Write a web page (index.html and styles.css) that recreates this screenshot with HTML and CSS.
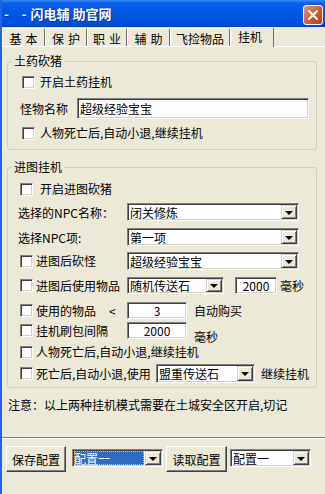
FILE: index.html
```html
<!DOCTYPE html>
<html lang="zh-CN">
<head>
    <meta charset="UTF-8">
    <title>闪电辅助</title>
    <link rel="stylesheet" href="styles.css">
</head>
<body>
    <div class="window">
        <div class="titlebar">
            <span class="title"><span class="dashes">- -</span>闪电辅 助官网</span>
            <span class="close">
                <svg width="20" height="20" viewBox="0 0 20 20">
                    <path d="M6 6 L14 14 M14 6 L6 14" stroke="#fff" stroke-width="2" stroke-linecap="round"/>
                </svg>
            </span>
        </div>

        <div class="tabs">
            <div class="tab">基本</div>
            <div class="tab">保护</div>
            <div class="tab">职业</div>
            <div class="tab">辅助</div>
            <div class="tab">飞捡物品</div>
            <div class="tab active">挂机</div>
        </div>

        <div class="panel">
            <fieldset class="group g1">
                <legend>土药砍猪</legend>
                <div class="row r-check g1-r1">
                    <span class="cb"></span><span class="cb-text">开启土药挂机</span>
                </div>
                <div class="row g1-r2">
                    <span class="lbl-name">怪物名称</span>
                    <span class="edit edit-name">超级经验宝宝</span>
                </div>
                <div class="row r-check g1-r3">
                    <span class="cb"></span><span class="cb-text">人物死亡后,自动小退,继续挂机</span>
                </div>
            </fieldset>

            <fieldset class="group g2">
                <legend>进图挂机</legend>
                <div class="row r-check g2-a">
                    <span class="cb"></span><span class="cb-text wide-gap">开启进图砍猪</span>
                </div>
                <div class="row g2-b">
                    <span class="lead lead-lbl">选择的NPC名称：</span>
                    <div class="combo combo-long"><span class="val">闭关修炼</span><span class="drop"></span></div>
                </div>
                <div class="row g2-c">
                    <span class="lead lead-lbl">选择NPC项:</span>
                    <div class="combo combo-long"><span class="val">第一项</span><span class="drop"></span></div>
                </div>
                <div class="row g2-d">
                    <span class="lead"><span class="cb"></span><span class="cb-text">进图后砍怪</span></span>
                    <div class="combo combo-long"><span class="val">超级经验宝宝</span><span class="drop"></span></div>
                </div>
                <div class="row g2-e">
                    <span class="lead"><span class="cb"></span><span class="cb-text">进图后使用物品</span></span>
                    <div class="combo combo-item"><span class="val">随机传送石</span><span class="drop"></span></div>
                    <span class="edit edit-ms">2000</span>
                    <span class="unit">毫秒</span>
                </div>
                <div class="row g2-f">
                    <span class="lead"><span class="cb"></span><span class="cb-text">使用的物品</span><span class="lt">&lt;</span></span>
                    <span class="edit edit-num">3</span>
                    <span class="after">自动购买</span>
                </div>
                <div class="row g2-g">
                    <span class="lead"><span class="cb"></span><span class="cb-text">挂机刷包间隔</span></span>
                    <span class="edit edit-num">2000</span>
                    <span class="after low">毫秒</span>
                </div>
                <div class="row r-check g2-h">
                    <span class="cb"></span><span class="cb-text">人物死亡后,自动小退,继续挂机</span>
                </div>
                <div class="row g2-i">
                    <span class="lead lead-wide"><span class="cb"></span><span class="cb-text">死亡后,自动小退,使用</span></span>
                    <div class="combo combo-death"><span class="val">盟重传送石</span><span class="drop"></span></div>
                    <span class="after-i">继续挂机</span>
                </div>
            </fieldset>

            <p class="note">注意：以上两种挂机模式需要在土城安全区开启,切记</p>
        </div>

        <div class="footer">
            <button class="btn btn-save">保存配置</button>
            <div class="combo combo-cfg"><span class="val selected">配置一</span><span class="drop"></span></div>
            <button class="btn btn-load">读取配置</button>
            <div class="combo combo-cfg2"><span class="val">配置一</span><span class="drop"></span></div>
        </div>
    </div>
</body>
</html>
```

FILE: styles.css
```css
* {
    box-sizing: border-box;
}

body {
    margin: 0;
    font-family: "Noto Sans CJK SC", "DejaVu Sans", sans-serif;
    font-size: 12px;
    color: #000;
    background: #ECE9D8;
    overflow: hidden;
}

.window {
    width: 325px;
    height: 494px;
    background: #ECE9D8;
    border-left: 2px solid #2761DB;
    overflow: hidden;
}

/* title bar */
.titlebar {
    height: 27px;
    margin-left: -2px;
    padding: 0 2px 0 4px;
    display: flex;
    justify-content: space-between;
    background: linear-gradient(to bottom, #3C8CFA 0, #0A60EB 3px, #0057E6 50%, #0052DE 85%, #0044C8 100%);
}

.title {
    color: #fff;
    font-weight: bold;
    font-size: 13px;
    line-height: 27px;
    text-shadow: 1px 1px #0B2D8C;
}

.dashes {
    letter-spacing: 5px;
    margin-right: -1px;
}

.close {
    width: 20px;
    height: 20px;
    margin-top: 5px;
    border: 1px solid #fff;
    border-radius: 3px;
    background: linear-gradient(135deg, #E9946F 0, #D5582F 55%, #C2401A 100%);
    display: flex;
}

.close svg {
    margin: -1px;
}

/* tabs */
.tabs {
    height: 19px;
    display: flex;
    align-items: flex-end;
}

.tab {
    height: 18px;
    padding-top: 3px;
    line-height: 14px;
    text-align: center;
    letter-spacing: 4px;
    text-indent: 4px;
    border-top: 1px solid #fff;
    border-left: 1px solid #fff;
    border-right: 1px solid #716F64;
    border-radius: 2px 2px 0 0;
}

.tab:nth-child(1) { width: 43px; }
.tab:nth-child(2) { width: 42px; }
.tab:nth-child(3) { width: 40px; }
.tab:nth-child(4) { width: 43px; }
.tab:nth-child(5) { width: 60px; letter-spacing: 0; text-indent: 0; }

.tab.active {
    position: relative;
    width: 44px;
    height: 20px;
    margin-bottom: -1px;
    padding-top: 2px;
    padding-right: 4px;
    letter-spacing: 0;
    text-indent: 0;
    background: #ECE9D8;
}

/* panel */
.panel {
    height: 392px;
    padding-top: 1px;
    border-top: 1px solid #fff;
    border-bottom: 1px solid #808080;
    box-shadow: 0 1px 0 #fff;
}

.group {
    width: 310px;
    min-width: 0;
    margin: 0 0 0 5px;
    padding: 0;
    border: 1px solid #D0D0BF;
    border-radius: 3px;
}

.group legend {
    margin-left: 4px;
    padding: 0 2px;
    line-height: 14px;
}

.g1 {
    margin-top: 6px;
    padding-bottom: 9px;
}

.g2 {
    margin-top: 10px;
    padding-bottom: 4px;
}

.row {
    display: flex;
    align-items: center;
}

.g1 .row { margin-left: 14px; }
.g2 .row { margin-left: 12px; }

.r-check { height: 14px; }

.g1-r1 { margin-top: 7px; }
.g1-r2 { margin-top: 9px; height: 21px; }
.g1-r3 { margin-top: 7px; }

.g2-a { margin-top: 8px; }
.g2-b { margin-top: 7px; height: 18px; }
.g2-c { margin-top: 7px; height: 18px; }
.g2-d { margin-top: 6px; height: 18px; }
.g2-e { margin-top: 7px; height: 17px; }
.g2-f { margin-top: 8px; height: 17px; }
.g2-g { margin-top: 3px; height: 17px; }
.g2-h { margin-top: 6px; }
.g2-i { margin-top: 5px; height: 19px; }

/* checkbox */
.cb {
    flex: none;
    width: 13px;
    height: 13px;
    background: #fff;
    border: 1px solid;
    border-color: #808080 #fff #fff #808080;
    box-shadow: inset 1px 1px #404040, inset -1px -1px #D4D0C8;
}

.cb-text {
    margin-left: 5px;
    line-height: 14px;
    white-space: nowrap;
}

.g2 .cb-text { margin-left: 3px; }
.g2 .cb-text.wide-gap { margin-left: 7px; }

.lbl-name {
    margin-left: -2px;
    width: 57px;
}

.lead {
    width: 107px;
    flex: none;
    display: flex;
    align-items: center;
    white-space: nowrap;
}

.lead-lbl {
    width: 109px;
    margin-left: -2px;
}

.lead-wide { width: 136px; }

.lt { margin-left: 13px; }

/* sunken edit */
.edit {
    background: #fff;
    border: 1px solid;
    border-color: #808080 #fff #fff #808080;
    box-shadow: inset 1px 1px #404040, inset -1px -1px #D4D0C8;
    padding: 0 2px;
    display: flex;
    align-items: center;
    height: 100%;
    white-space: nowrap;
}

.edit-name { width: 232px; }

.edit-ms {
    width: 42px;
    margin-left: 11px;
    justify-content: center;
}

.edit-num {
    width: 60px;
    justify-content: center;
}

.unit { margin-left: 3px; }

.after { margin-left: 7px; }

.after.low {
    align-self: flex-start;
    margin-top: 8px;
    line-height: 14px;
}

.after-i { margin-left: 6px; }

/* combo box */
.combo {
    display: flex;
    height: 100%;
    padding: 1px;
    background: #fff;
    border: 1px solid;
    border-color: #808080 #fff #fff #808080;
    box-shadow: inset 1px 1px #404040, inset -1px -1px #D4D0C8;
}

.combo .val {
    flex: 1;
    min-width: 0;
    padding-left: 1px;
    display: flex;
    align-items: center;
    white-space: nowrap;
}

.combo .drop {
    flex: none;
    width: 16px;
    background: #ECE9D8;
    border: 1px solid;
    border-color: #D4D0C8 #404040 #404040 #D4D0C8;
    box-shadow: inset 1px 1px #fff, inset -1px -1px #808080;
    display: flex;
    align-items: center;
    justify-content: center;
}

.combo .drop::after {
    content: "";
    border-left: 4px solid transparent;
    border-right: 4px solid transparent;
    border-top: 4px solid #000;
    margin-top: 1px;
}

.combo-long { width: 172px; }
.combo-item { width: 97px; }
.combo-death { width: 99px; }

.note {
    margin: 10px 0 0 6px;
    line-height: 14px;
}

/* footer */
.footer {
    display: flex;
    align-items: flex-start;
    padding: 8px 0 0 4px;
}

.btn {
    height: 26px;
    padding: 0;
    font-family: inherit;
    font-size: 12px;
    color: #000;
    background: #ECE9D8;
    border: 1px solid;
    border-color: #fff #404040 #404040 #fff;
    box-shadow: inset -1px -1px #808080;
}

.btn-save { width: 60px; }

.btn-load {
    width: 61px;
    margin-left: 3px;
}

.combo-cfg {
    width: 91px;
    height: 18px;
    margin: 3px 0 0 6px;
}

.combo-cfg2 {
    width: 81px;
    height: 18px;
    margin: 3px 0 0 3px;
}

.combo .val.selected {
    margin-right: 1px;
    padding-left: 0;
    color: #fff;
    background: #316AC5;
    outline: 1px dotted #E8C35A;
    outline-offset: -1px;
}
```
